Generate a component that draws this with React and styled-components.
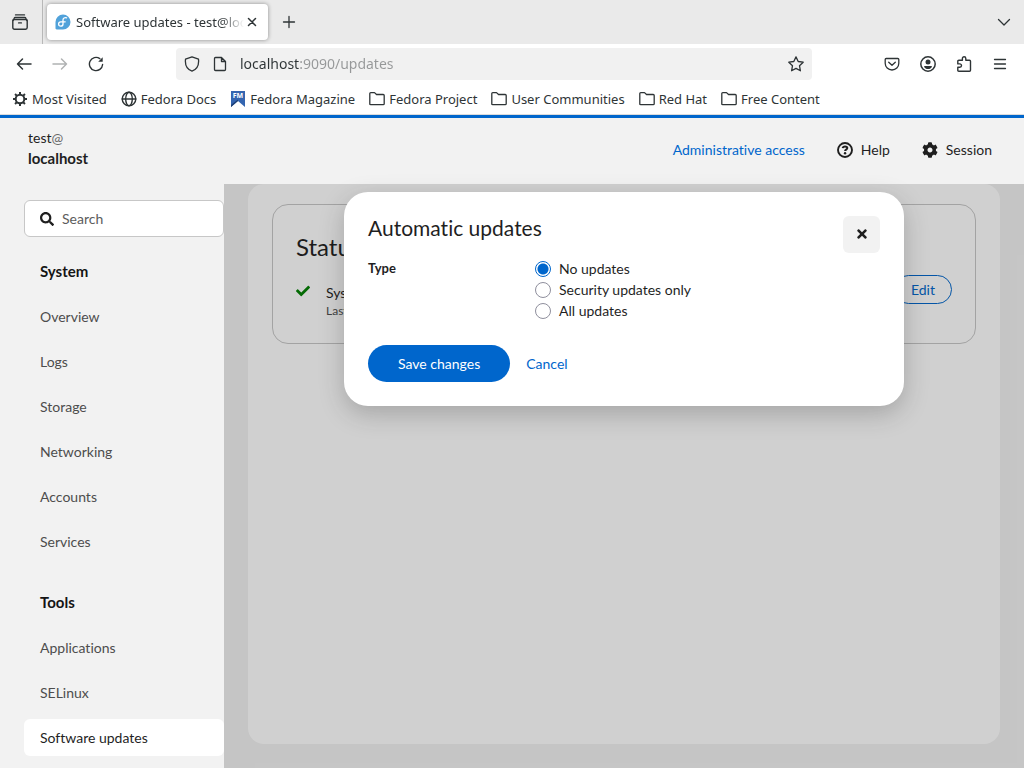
import React from "react";
import styled, { createGlobalStyle } from "styled-components";
import { FaCheck, FaCog, FaSearch, FaTimes } from "react-icons/fa";

const GlobalStyle = createGlobalStyle`
  *, *::before, *::after { box-sizing: border-box; }
  body {
    margin: 0;
    background: #f2f2f2;
    color: #1f1f1f;
    font-family: Lato, "Liberation Sans", sans-serif;
    font-size: 14px;
    font-variant-ligatures: none;
    line-height: 21px;
  }
  button, input { font: inherit; font-variant-ligatures: none; color: inherit; }
  a { text-decoration: none; }
  svg { display: block; flex: none; }
`;

const Window = styled.div`
  min-height: 100vh;
  display: flex;
  flex-direction: column;
`;

/* Browser chrome */
const Chrome = styled.div`
  font-family: "Noto Sans", sans-serif;
  font-size: 13px;
  line-height: 20px;
  color: #2e3436;
  background: #fff;
  border-bottom: 1px solid #dcdcdc;
`;

const TabStrip = styled.div`
  display: flex;
  align-items: center;
  height: 44px;
  background: #eaeaea;
`;

const IconButton = styled.button`
  display: flex;
  align-items: center;
  justify-content: center;
  width: ${(p) => p.$width || 36}px;
  height: 32px;
  padding: 0;
  border: 0;
  background: none;
  color: ${(p) => (p.$dim ? "#b0b2b3" : "#2e3436")};
`;

const RecentTabs = styled.div`
  display: flex;
  align-items: center;
  align-self: stretch;
  padding: 0 4px 0 2px;
  border-right: 1px solid #b8b8b8;
`;

const Tab = styled.div`
  display: flex;
  align-items: center;
  width: 221px;
  height: 36px;
  margin: 0 3px 0 4px;
  padding: 0 8px;
  border-radius: 4px;
  background: #fff;
  box-shadow: 0 0 4px rgba(0, 0, 0, 0.4);
`;

const TabTitle = styled.span`
  flex: 1;
  margin-left: 5px;
  overflow: hidden;
  white-space: nowrap;
  mask-image: linear-gradient(to left, transparent, #000 24px);
`;

const Spacer = styled.div`
  flex: 1;
`;

const Toolbar = styled.div`
  display: flex;
  align-items: center;
  height: 40px;
  padding: 0 6px;
`;

const UrlBar = styled.div`
  flex: 1;
  display: flex;
  align-items: center;
  height: 32px;
  margin: 0 62px;
  padding: 0 8px;
  gap: 12px;
  border-radius: 4px;
  background: #f1f1f1;
`;

const UrlInput = styled.input`
  flex: 1;
  min-width: 0;
  padding: 0;
  border: 0;
  outline: 0;
  font-size: 14px;
  color: transparent;
  background: linear-gradient(to right, #2e3436 60px, #969899 60px);
  background-clip: text;
`;

const Bookmarks = styled.nav`
  display: flex;
  align-items: center;
  height: 30px;
  padding: 0 12px;
  gap: 14px;
`;

const Bookmark = styled.a`
  display: flex;
  align-items: center;
  gap: 4px;
  color: #2e3436;
  white-space: nowrap;
`;

/* Application shell */
const Shell = styled.div`
  flex: 1;
  display: flex;
  flex-direction: column;
  border-top: 3px solid #06c;
`;

const Masthead = styled.header`
  display: flex;
  align-items: center;
  justify-content: space-between;
  height: 66px;
  padding: 0 32px 3px 28px;
`;

const Host = styled.div`
  padding-bottom: 3px;

  small { font-size: inherit; color: #6a6a6a; }
  strong { display: block; font-size: 15px; }
`;

const MastheadActions = styled.div`
  display: flex;
  gap: 32px;
`;

const TextButton = styled.button`
  display: flex;
  align-items: center;
  gap: 8px;
  padding: ${(p) => p.$padding || "0"};
  border: 0;
  background: none;
  color: ${(p) => (p.$link ? "#06c" : "#1f1f1f")};
`;

const Columns = styled.div`
  flex: 1;
  display: flex;
`;

const Sidebar = styled.nav`
  width: 224px;
  padding: 16px 0 12px 24px;
`;

const SearchBox = styled.label`
  display: flex;
  align-items: center;
  gap: 8px;
  height: 37px;
  padding: 0 15px;
  border: 1px solid #c7c7c7;
  border-radius: 6px;
  background: #fff;

  input {
    width: 100%;
    padding: 0;
    border: 0;
    outline: 0;
    background: none;
  }
  input::placeholder { color: #5c5c5c; opacity: 1; }
`;

const NavSection = styled.section`
  display: flex;
  flex-direction: column;
  gap: 8px;
  margin-top: ${(p) => (p.$first ? 16 : 24)}px;
`;

const NavTitle = styled.h2`
  margin: 0;
  padding: 8px 16px;
  color: #151515;
  font-size: 15px;
  font-weight: 700;
  line-height: 21px;
`;

const NavLink = styled.a`
  padding: 8px 16px;
  border-radius: 6px;
  background: ${(p) => (p.$current ? "#fff" : "none")};
  color: ${(p) => (p.$current ? "#1f1f1f" : "#4d4d4d")};
`;

const Main = styled.main`
  position: relative;
  flex: 1;
  display: flex;
  padding: 0 24px 24px;
`;

const Page = styled.div`
  flex: 1;
  padding: 20px 24px;
  border-radius: 16px;
  background: #fff;
`;

const Card = styled.section`
  display: flex;
  flex-direction: column;
  gap: 20px;
  padding: 26px 23px 24px;
  border: 1px solid #c7c7c7;
  border-radius: 16px;

  h2 {
    margin: 0;
    font-size: 24px;
    font-weight: 400;
    line-height: 31px;
  }
`;

const StatusRow = styled.div`
  display: flex;
  gap: 16px;
  align-items: flex-start;
  height: 37px;

  > div { flex: 1; }
  > svg { margin-top: 2px; }
  small { display: block; font-size: 12px; line-height: 16px; color: #4d4d4d; }
`;

const EditButton = styled.button`
  height: 29px;
  margin-top: -7px;
  padding: 0 16px;
  border: 1px solid #06c;
  border-radius: 15px;
  background: none;
  color: #06c;
`;

const Backdrop = styled.div`
  position: absolute;
  inset: 0;
  padding: 8px;
  background: rgba(21, 21, 21, 0.2);
`;

const Dialog = styled.form`
  max-width: 560px;
  margin: 0 auto;
  padding: 24px;
  border-radius: 24px;
  background: #fff;
  box-shadow: 0 8px 24px rgba(41, 41, 41, 0.25);
`;

const DialogHeader = styled.div`
  display: flex;
  justify-content: space-between;

  h1 {
    margin: 0;
    font-size: 21px;
    font-weight: 400;
    line-height: 24px;
  }
`;

const CloseButton = styled.button`
  display: flex;
  align-items: center;
  justify-content: center;
  width: 37px;
  height: 37px;
  padding: 0 0 2px;
  border: 0;
  border-radius: 6px;
  background: #f2f2f2;
`;

const Field = styled.div`
  display: grid;
  grid-template-columns: 167px 1fr;
  margin: 5px 0 24px;
`;

const FieldLabel = styled.span`
  font-size: 13px;
  font-weight: 700;
  line-height: 20px;
`;

const RadioLabel = styled.label`
  display: flex;
  align-items: center;
  gap: 8px;
`;

const Radio = styled.input.attrs({ type: "radio" })`
  appearance: none;
  width: 16px;
  height: 16px;
  margin: 0;
  border: 1px solid #8f8f9d;
  border-radius: 50%;
  background: #fff;

  &:checked {
    border-color: #06c;
    background: radial-gradient(circle, #06c 5px, #fff 6px);
  }
`;

const DialogActions = styled.div`
  display: flex;
  align-items: center;
`;

const PrimaryButton = styled.button`
  height: 37px;
  padding: 0 30px;
  border: 0;
  border-radius: 19px;
  background: #06c;
  color: #fff;
`;

/* Icons */
const Line = ({ size = 16, width = 1.3, children, ...rest }) => (
  <svg width={size} height={size} viewBox="0 0 16 16" fill="none" stroke="currentColor"
    strokeWidth={width} strokeLinecap="round" strokeLinejoin="round" aria-hidden="true" {...rest}>
    {children}
  </svg>
);

const RecentIcon = () => (
  <Line width={1.4}><path d="M3.500.9h9" /><rect x=".8" y="5.500" width="14.400" height="9.700" rx="1.600" /><path d="M1 6.500l1.200-2.300c.2-.5.500-.7 1-.7h9.600c.5 0 .8.200 1 .7L15 6.500M6.600 8.900h2.800" /></Line>
);
const PlusIcon = () => <Line><path d="M8 2.500v11M2.500 8h11" /></Line>;
const CrossIcon = () => <Line width={1.5}><path d="M4.500 4.500l7 7M11.500 4.500l-7 7" /></Line>;
const ChevronIcon = () => <Line><path d="M2.500 5.500 8 11l5.500-5.500" /></Line>;
const BackIcon = () => <Line width={1.5}><path d="M15 8H1.500M6.500 3l-5 5 5 5" /></Line>;
const ForwardIcon = () => <Line width={1.5}><path d="M1 8h13.500M9.500 3l5 5-5 5" /></Line>;
const ReloadIcon = () => (
  <Line width={1.4}><path d="M14.600 8.500A6.600 6.600 0 1 1 11.800 2.600" /><path d="M14.700 1.200v4.500h-4.500z" fill="currentColor" stroke="none" /></Line>
);
const ShieldIcon = () => <Line><path d="M8 .8 14.500 3.200c.6 5.600-1.700 10.300-6.500 12-4.800-1.700-7.100-6.400-6.500-12z" /></Line>;
const FileIcon = () => <Line><path d="M3.500 1.500h6l4 4v8c0 .6-.4 1-1 1h-9c-.6 0-1-.4-1-1v-11c0-.6.400-1 1-1zM9.500 1.500v4h4" /></Line>;
const StarIcon = () => <Line><path d="m8 .9 2.200 4.600 5 .7-3.700 3.500.9 5.100L8 12.400l-4.400 2.400.9-5.100L.8 6.200l5-.7z" /></Line>;
const PocketIcon = () => <Line><path d="M2.200 2.500h11.600c.7 0 1 .5 1 1v3.700c0 3.800-3 6.800-6.800 6.800S1.200 11 1.200 7.200V3.500c0-.5.300-1 1-1zM4.700 6.200 8 9.300l3.300-3.100" /></Line>;
const AccountIcon = () => (
  <Line width={1.5}><circle cx="8" cy="8" r="7.200" /><circle cx="8" cy="6" r="2.500" fill="currentColor" stroke="none" /><path d="M4 10.800c0-.5.400-.9.900-.9h6.200c.5 0 .9.400.9.900-.8 1.500-2.300 2.300-4 2.300s-3.200-.8-4-2.300z" fill="currentColor" stroke="none" /></Line>
);
const PuzzleIcon = () => (
  <Line width={1.4}><path d="M6.400 4.300V2.500a1.700 1.700 0 0 1 3.400 0v1.800h3.700c.6 0 1 .4 1 1v8.900c0 .6-.4 1-1 1H2.800c-.6 0-1-.4-1-1v-2.900h2a1.700 1.700 0 0 0 0-3.400h-2V5.300c0-.6.400-1 1-1z" /></Line>
);
const MenuIcon = () => <Line><path d="M2.500 3.500h11M2.500 8h11M2.500 12.500h11" /></Line>;
const FolderIcon = () => <Line width={1.3}><path d="M.8 13.200V2.600c0-.6.400-1 1-1h3.700l2 1.900h6.700c.6 0 1 .4 1 1v8.200c0 .6-.4 1-1 1H1.800c-.6 0-1-.1-1-.5z" /></Line>;
const GlobeIcon = () => <Line width={1.4}><circle cx="8" cy="8" r="6.800" /><ellipse cx="8" cy="8" rx="3.300" ry="6.800" /><path d="M1.200 8h13.600" /></Line>;
const GearIcon = () => (
  <Line width={2} strokeLinecap="butt"><circle cx="8" cy="8" r="4.300" /><path d="M8 1v2.600M8 12.400V15M1 8h2.600M12.400 8H15M3.050 3.050l1.840 1.840M11.100 11.100l1.850 1.850M3.050 12.950l1.840-1.840M11.100 4.900l1.850-1.850" /></Line>
);
const MagazineIcon = () => (
  <svg width="16" height="16" viewBox="0 0 16 16" aria-hidden="true">
    <path d="M1 0h14v16l-7-6-7 6z" fill="#3465b0" />
    <path d="M1 16l7-6V8.500L1 14z" fill="#1d3f73" />
    <text x="8" y="7" fontSize="7" fontWeight="700" textAnchor="middle" fill="#fff">FM</text>
  </svg>
);
const FedoraIcon = () => (
  <svg width="16" height="16" viewBox="0 0 16 16" aria-hidden="true">
    <path d="M8 .5a7.500 7.500 0 1 1 0 15H1.700c-.7 0-1.200-.5-1.200-1.200V8A7.500 7.500 0 0 1 8 .5z" fill="#51a2da" />
    <path d="M11.600 3.900C9.700 3.200 8 4.200 8 6.100v4a2.200 2.200 0 1 1-2.300-2.300h4.500" fill="none" stroke="#fff" strokeWidth="1.300" strokeLinecap="round" />
  </svg>
);
const HelpIcon = () => (
  <Line width={1.9}><circle cx="8" cy="8" r="7" /><path d="M5.700 6.100C5.900 4.900 6.900 4.400 8 4.400c1.300 0 2.300.7 2.300 1.700 0 1.500-2.200 1.500-2.200 2.900" strokeLinecap="butt" strokeWidth="2" /><circle cx="8.050" cy="11.300" r="1.200" fill="currentColor" stroke="none" /></Line>
);

const bookmarks = [
  ["Most Visited", GearIcon],
  ["Fedora Docs", GlobeIcon],
  ["Fedora Magazine", MagazineIcon],
  ["Fedora Project", FolderIcon],
  ["User Communities", FolderIcon],
  ["Red Hat", FolderIcon],
  ["Free Content", FolderIcon],
];

const navigation = [
  ["System", ["Overview", "Logs", "Storage", "Networking", "Accounts", "Services"]],
  ["Tools", ["Applications", "SELinux", "Software updates"]],
];

const updateTypes = ["No updates", "Security updates only", "All updates"];

export default function App() {
  return (
    <Window>
      <GlobalStyle />
      <Chrome>
        <TabStrip>
          <RecentTabs>
            <IconButton aria-label="Recent tabs"><RecentIcon /></IconButton>
          </RecentTabs>
          <Tab>
            <FedoraIcon />
            <TabTitle>Software updates - test@localhost</TabTitle>
            <IconButton $width={16} aria-label="Close tab"><CrossIcon /></IconButton>
          </Tab>
          <IconButton aria-label="New tab"><PlusIcon /></IconButton>
          <Spacer />
          <IconButton $width={40} aria-label="List all tabs"><ChevronIcon /></IconButton>
        </TabStrip>
        <Toolbar>
          <IconButton aria-label="Back"><BackIcon /></IconButton>
          <IconButton aria-label="Forward" $dim><ForwardIcon /></IconButton>
          <IconButton aria-label="Reload"><ReloadIcon /></IconButton>
          <UrlBar>
            <ShieldIcon />
            <FileIcon />
            <UrlInput aria-label="Address" defaultValue="localhost:9090/updates" />
            <IconButton $width={16} aria-label="Bookmark this page"><StarIcon /></IconButton>
          </UrlBar>
          <IconButton aria-label="Save to Pocket"><PocketIcon /></IconButton>
          <IconButton aria-label="Account"><AccountIcon /></IconButton>
          <IconButton aria-label="Extensions"><PuzzleIcon /></IconButton>
          <IconButton aria-label="Menu"><MenuIcon /></IconButton>
        </Toolbar>
        <Bookmarks>
          {bookmarks.map(([name, Icon]) => (
            <Bookmark key={name} href="#"><Icon />{name}</Bookmark>
          ))}
        </Bookmarks>
      </Chrome>
      <Shell>
        <Masthead>
          <Host>test<small>@</small><strong>localhost</strong></Host>
          <MastheadActions>
            <TextButton $link>Administrative access</TextButton>
            <TextButton><HelpIcon />Help</TextButton>
            <TextButton><FaCog size={16} />Session</TextButton>
          </MastheadActions>
        </Masthead>
        <Columns>
          <Sidebar>
            <SearchBox>
              <FaSearch size={14} />
              <input type="search" placeholder="Search" aria-label="Search" />
            </SearchBox>
            {navigation.map(([title, items], index) => (
              <NavSection key={title} $first={index === 0}>
                <NavTitle>{title}</NavTitle>
                {items.map((item) => (
                  <NavLink key={item} href="#" $current={item === "Software updates"}>{item}</NavLink>
                ))}
              </NavSection>
            ))}
          </Sidebar>
          <Main>
            <Page>
              <Card>
                <h2>Status</h2>
                <StatusRow>
                  <FaCheck size={14} color="#008000" />
                  <div>System is up to date<small>Last checked</small></div>
                  <EditButton>Edit</EditButton>
                </StatusRow>
              </Card>
            </Page>
            <Backdrop>
              <Dialog role="dialog" aria-labelledby="dialog-title">
                <DialogHeader>
                  <h1 id="dialog-title">Automatic updates</h1>
                  <CloseButton type="button" aria-label="Close"><FaTimes size={14} /></CloseButton>
                </DialogHeader>
                <Field role="radiogroup" aria-labelledby="type-label">
                  <FieldLabel id="type-label">Type</FieldLabel>
                  <div>
                    {updateTypes.map((type, index) => (
                      <RadioLabel key={type}>
                        <Radio name="type" defaultChecked={index === 0} />
                        {type}
                      </RadioLabel>
                    ))}
                  </div>
                </Field>
                <DialogActions>
                  <PrimaryButton type="button">Save changes</PrimaryButton>
                  <TextButton type="button" $link $padding="8px 16px">Cancel</TextButton>
                </DialogActions>
              </Dialog>
            </Backdrop>
          </Main>
        </Columns>
      </Shell>
    </Window>
  );
}
